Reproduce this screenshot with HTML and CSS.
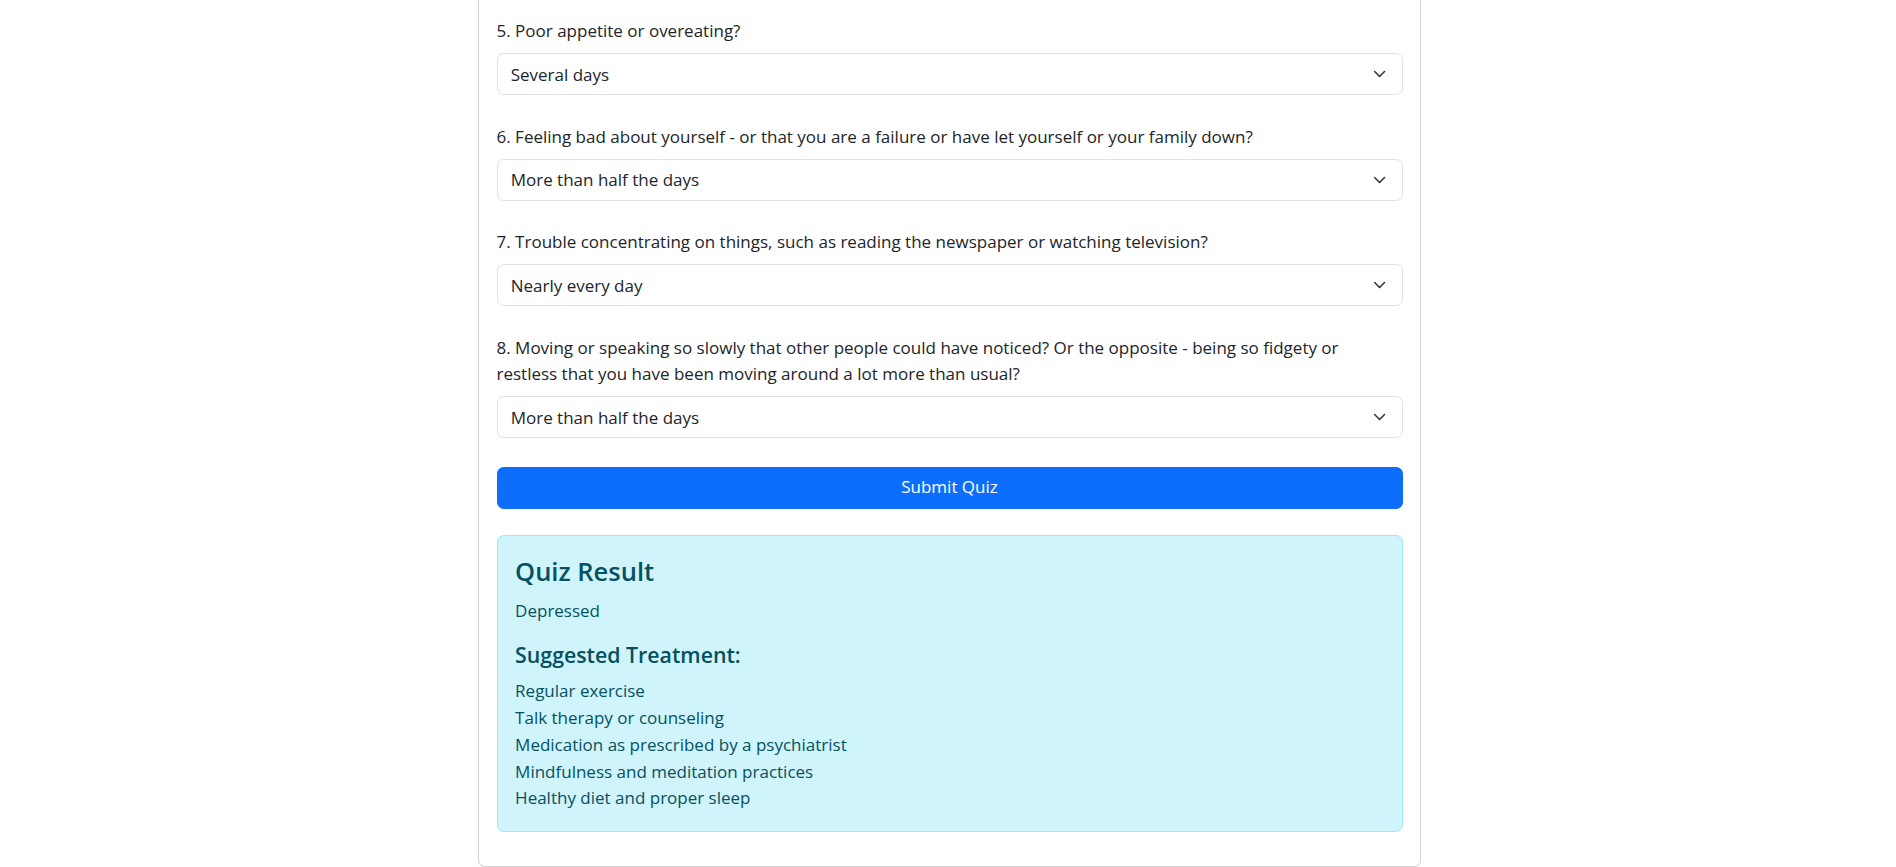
FILE: index.html
```html
<!DOCTYPE html>
<html lang="en">
<head>
<meta charset="utf-8">
<title>Depression Quiz</title>
<link rel="stylesheet" href="styles.css">
</head>
<body>
<div class="page">
  <div class="card">
    <form class="quiz">
      <div class="group">
        <label class="q-label">5. Poor appetite or overeating?</label>
        <div class="select-wrap">
          <select class="q-select"><option>Several days</option></select>
          <svg class="chev" viewBox="0 0 16 16"><path d="m2 5 6 6 6-6" fill="none" stroke="#343a40" stroke-width="2" stroke-linecap="round" stroke-linejoin="round"/></svg>
        </div>
      </div>
      <div class="group">
        <label class="q-label">6. Feeling bad about yourself - or that you are a failure or have let yourself or your family down?</label>
        <div class="select-wrap">
          <select class="q-select"><option>More than half the days</option></select>
          <svg class="chev" viewBox="0 0 16 16"><path d="m2 5 6 6 6-6" fill="none" stroke="#343a40" stroke-width="2" stroke-linecap="round" stroke-linejoin="round"/></svg>
        </div>
      </div>
      <div class="group">
        <label class="q-label">7. Trouble concentrating on things, such as reading the newspaper or watching television?</label>
        <div class="select-wrap">
          <select class="q-select"><option>Nearly every day</option></select>
          <svg class="chev" viewBox="0 0 16 16"><path d="m2 5 6 6 6-6" fill="none" stroke="#343a40" stroke-width="2" stroke-linecap="round" stroke-linejoin="round"/></svg>
        </div>
      </div>
      <div class="group">
        <label class="q-label">8. Moving or speaking so slowly that other people could have noticed? Or the opposite - being so fidgety or restless that you have been moving around a lot more than usual?</label>
        <div class="select-wrap">
          <select class="q-select"><option>More than half the days</option></select>
          <svg class="chev" viewBox="0 0 16 16"><path d="m2 5 6 6 6-6" fill="none" stroke="#343a40" stroke-width="2" stroke-linecap="round" stroke-linejoin="round"/></svg>
        </div>
      </div>
      <button type="button" class="submit">Submit Quiz</button>
    </form>
    <div class="result">
      <h4 class="result-title">Quiz Result</h4>
      <p class="result-text">Depressed</p>
      <h5 class="result-sub">Suggested Treatment:</h5>
      <ul class="treatments">
        <li>Regular exercise</li>
        <li>Talk therapy or counseling</li>
        <li>Medication as prescribed by a psychiatrist</li>
        <li>Mindfulness and meditation practices</li>
        <li>Healthy diet and proper sleep</li>
      </ul>
    </div>
  </div>
</div>
</body>
</html>
```
FILE: styles.css
```css
html, body {
  margin: 0;
  padding: 0;
  background: #fff;
}
body {
  font-family: "Open Sans", "Noto Sans", sans-serif;
  font-size: 17px;
  line-height: 26.4px;
  color: #212529;
}
.page {
  padding-left: 3px;
  margin-top: -20px;
}
.card {
  width: 943.2px;
  box-sizing: border-box;
  margin: 0 auto;
  border: 1px solid rgba(0, 0, 0, 0.175);
  border-radius: 6.6px;
  padding: 17.6px;
  background: #fff;
}
.quiz {
  display: flex;
  flex-direction: column;
  padding-top: 19.4px;
}
.group {
  margin-bottom: 28.6px;
}
.q-label {
  display: block;
  margin-bottom: 8.8px;
}
.select-wrap {
  position: relative;
}
.q-select {
  display: block;
  width: 100%;
  height: 41.8px;
  box-sizing: border-box;
  -webkit-appearance: none;
  appearance: none;
  border: 1px solid #dee2e6;
  border-radius: 6.6px;
  padding: 7.4px 40px 5.8px 13.2px;
  font-family: inherit;
  font-size: 17px;
  line-height: 26.4px;
  color: #212529;
  background: #fff;
  margin: 0;
}
.chev {
  position: absolute;
  right: 16.4px;
  top: 50%;
  width: 13.2px;
  height: 13.2px;
  transform: translateY(-50%);
  pointer-events: none;
}
.submit {
  display: block;
  width: 100%;
  height: 41.8px;
  box-sizing: border-box;
  border: 1px solid #0d6efd;
  border-radius: 6.6px;
  background: #0d6efd;
  color: #fff;
  font-family: inherit;
  font-size: 17px;
  line-height: 26.4px;
  padding: 6.6px 13.2px;
  margin: 0;
}
.result {
  margin-top: 26.8px;
  margin-bottom: 17px;
  background: #cff4fc;
  border: 1px solid #9eeaf9;
  border-radius: 6.6px;
  color: #055160;
  padding: 20px 17.6px 18.6px;
}
.result-title {
  margin: 0 0 10px;
  font-size: 25.5px;
  line-height: 31.7px;
  font-weight: 600;
}
.result-text {
  margin: 0 0 17.6px;
}
.result-sub {
  margin: 0 0 10px;
  font-size: 21.3px;
  line-height: 26.4px;
  font-weight: 600;
}
.treatments {
  list-style: none;
  margin: 0;
  padding: 0;
}
.treatments li {
  line-height: 26.7px;
}
```
